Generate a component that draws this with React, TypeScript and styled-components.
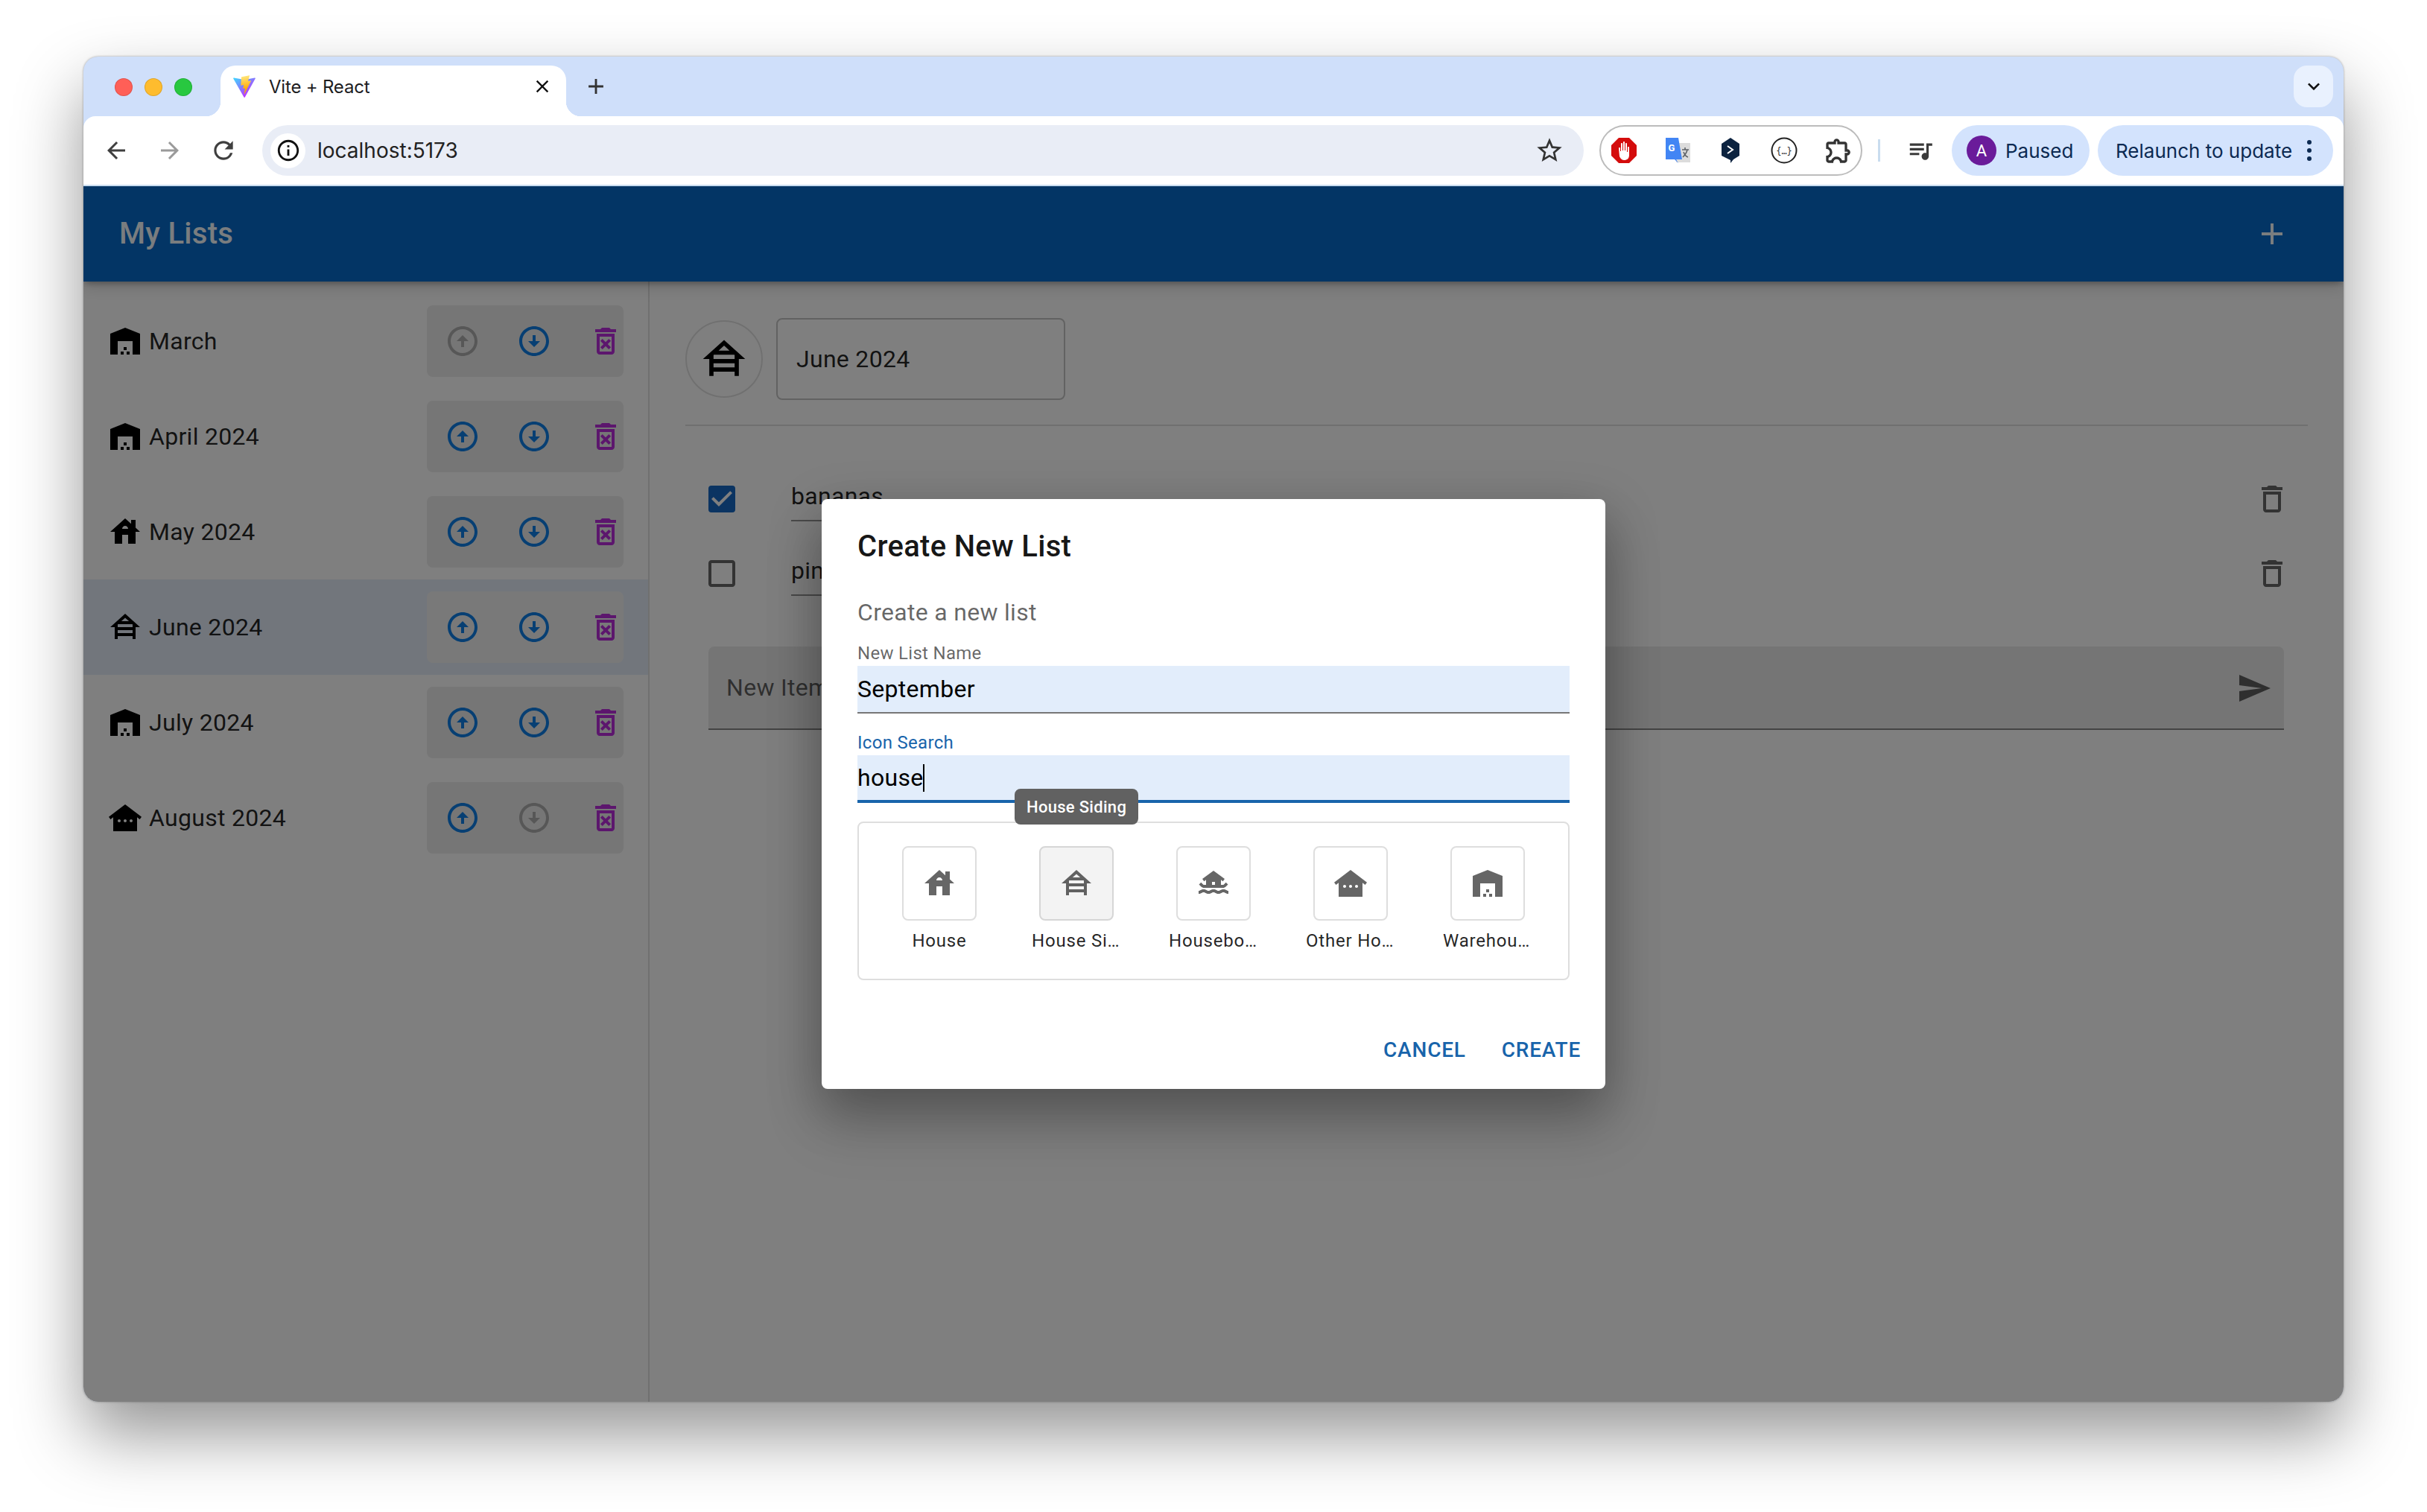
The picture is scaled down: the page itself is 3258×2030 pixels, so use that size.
import React from 'react';
import styled, { createGlobalStyle } from 'styled-components';
import {
  MdAdd, MdArrowBack, MdArrowForward, MdCheckBox, MdCheckBoxOutlineBlank, MdClose, MdHouse,
  MdHouseSiding, MdHouseboat, MdInfoOutline, MdKeyboardArrowDown, MdOtherHouses,
  MdOutlineArrowCircleDown, MdOutlineArrowCircleUp, MdOutlineDelete, MdOutlineDeleteForever,
  MdOutlineExtension, MdQueueMusic, MdRefresh, MdSend, MdStarBorder, MdWarehouse,
} from 'react-icons/md';

const GlobalStyle = createGlobalStyle`
  html, body { margin: 0; padding: 0; background: #fff; }
  body { font-family: Roboto, "Liberation Sans", sans-serif; }
  * { box-sizing: border-box; }
`;

const Page = styled.div`
  width: 3258px;
  height: 2030px;
  padding: 76px 112px 148px;
  overflow: hidden;
  background: #fff;
`;

const Win = styled.div`
  height: 100%;
  display: flex;
  flex-direction: column;
  border-radius: 20px;
  background: #cfdffa;
  box-shadow: 0 44px 90px rgba(0, 0, 0, 0.42), 0 0 3px rgba(0, 0, 0, 0.35);
`;

/* browser chrome */
const TabStrip = styled.div`
  height: 80px;
  flex: none;
  display: flex;
  padding: 12px 14px 0 42px;
`;

const Lights = styled.div`
  display: flex;
  gap: 16px;
  padding-top: 17px;
`;

const Light = styled.span<{ $c: string }>`
  width: 24px;
  height: 24px;
  border-radius: 50%;
  background: ${(p) => p.$c};
  box-shadow: inset 0 0 0 1px rgba(0, 0, 0, 0.12);
`;

const Tab = styled.div`
  position: relative;
  width: 464px;
  height: 68px;
  margin-left: 38px;
  padding: 0 18px 12px 15px;
  display: flex;
  align-items: center;
  background: #fff;
  border-radius: 20px 20px 0 0;
  font: 400 24px Inter, "Liberation Sans", sans-serif;
  color: #1d1d1f;

  &::before, &::after {
    content: '';
    position: absolute;
    bottom: 0;
    width: 20px;
    height: 20px;
  }
  &::before { left: -20px; background: radial-gradient(circle at 0 0, transparent 20px, #fff 20.5px); }
  &::after { right: -20px; background: radial-gradient(circle at 100% 0, transparent 20px, #fff 20.5px); }
`;

const TabTitle = styled.span`
  margin-left: 16px;
  flex: 1;
  letter-spacing: -0.2px;
`;

const NewTab = styled.div`
  width: 40px;
  margin-left: 20px;
  height: 56px;
  display: flex;
  align-items: center;
  justify-content: center;
  color: #333;
`;

const TabMenu = styled.div`
  width: 53px;
  height: 56px;
  margin-left: auto;
  border-radius: 18px;
  display: flex;
  align-items: center;
  justify-content: center;
  background: #e9f1fe;
  color: #111;
`;

const Toolbar = styled.div`
  height: 94px;
  flex: none;
  display: flex;
  align-items: flex-start;
  padding: 12px 14px 0 8px;
  background: #fff;
  border-radius: 16px 16px 0 0;
  border-bottom: 2px solid #c9dcef;
  font-family: Inter, "Liberation Sans", sans-serif;
`;

const NavButton = styled.div<{ $off?: boolean }>`
  width: 72px;
  height: 68px;
  display: flex;
  align-items: center;
  justify-content: center;
  color: ${(p) => (p.$off ? '#9a9a9a' : '#3f3f3f')};
`;

const Omnibox = styled.div`
  flex: 1;
  height: 68px;
  margin-left: 16px;
  padding: 0 26px 0 11px;
  display: flex;
  align-items: center;
  border-radius: 34px;
  background: #e9edf6;
  color: #222;
  font-size: 28px;
`;

const SiteInfo = styled.div`
  width: 47px;
  height: 47px;
  display: flex;
  align-items: center;
  justify-content: center;
  border-radius: 50%;
  background: #fff;
  color: #111;
`;

const Url = styled.span`
  margin-left: 16px;
  flex: 1;
`;

const ExtensionPill = styled.div`
  width: 353px;
  height: 68px;
  margin-left: 21px;
  padding: 0 10px 0 13px;
  display: flex;
  align-items: center;
  justify-content: space-between;
  border: 2px solid #bcbcbc;
  border-radius: 34px;
`;

const ExtIcon = styled.svg`
  width: 36px;
  height: 36px;
  display: block;
`;

const ToolbarDivider = styled.div`
  width: 3px;
  height: 30px;
  margin: 19px 0 0 21px;
  background: #c9dcef;
`;

const MediaButton = styled.div`
  width: 48px;
  height: 68px;
  margin-left: 30px;
  display: flex;
  align-items: center;
  justify-content: center;
  color: #3a3a3a;
`;

const ProfilePill = styled.div`
  width: 185px;
  height: 68px;
  margin-left: 18px;
  padding-left: 20px;
  display: flex;
  align-items: center;
  border-radius: 34px;
  background: #d3e3fd;
  color: #0c2a52;
  font-size: 26px;
`;

const Avatar = styled.div`
  width: 40px;
  height: 40px;
  margin-right: 12px;
  display: flex;
  align-items: center;
  justify-content: center;
  border-radius: 50%;
  background: #6a1b9a;
  color: #fff;
  font: 400 22px Roboto, sans-serif;
`;

const UpdatePill = styled.div`
  width: 316px;
  height: 68px;
  margin-left: 11px;
  padding-left: 24px;
  display: flex;
  align-items: center;
  border-radius: 34px;
  background: #d3e3fd;
  color: #0c2a52;
  font-size: 26px;
  white-space: nowrap;
`;

const Dots = styled.div`
  margin-left: 20px;
  display: flex;
  flex-direction: column;
  gap: 5px;

  span {
    width: 6px;
    height: 6px;
    border-radius: 50%;
    background: #0c2a52;
  }
`;

/* the app */
const Viewport = styled.div`
  position: relative;
  flex: 1;
  min-height: 0;
  display: flex;
  flex-direction: column;
  overflow: hidden;
  background: #fff;
  border-radius: 0 0 20px 20px;
  letter-spacing: 0.3px;
`;

const AppBar = styled.div`
  position: relative;
  z-index: 1;
  height: 128px;
  flex: none;
  display: flex;
  align-items: center;
  justify-content: space-between;
  padding: 0 72px 0 48px;
  background: #066aca;
  color: #f4faff;
  box-shadow: 0 4px 8px -2px rgba(0, 0, 0, 0.3), 0 8px 20px rgba(0, 0, 0, 0.14);
  font: 500 40px/64px Roboto, sans-serif;
`;

const Body = styled.div`
  flex: 1;
  display: flex;
  min-height: 0;
`;

const Sidebar = styled.div`
  width: 760px;
  flex: none;
  padding-top: 16px;
  border-right: 2px solid rgba(0, 0, 0, 0.12);
`;

const ListRow = styled.div<{ $active?: boolean }>`
  height: 128px;
  display: flex;
  align-items: center;
  padding: 0 33px 0 32px;
  background: ${(p) => (p.$active ? '#e4ecf8' : 'transparent')};
  color: rgba(0, 0, 0, 0.87);
  font-size: 32px;
`;

const RowIcon = styled.div`
  width: 48px;
  height: 48px;
  margin-right: 8px;
  color: #000;
`;

const RowName = styled.span`
  flex: 1;
`;

const RowActions = styled.div<{ $active?: boolean }>`
  width: 264px;
  height: 96px;
  display: flex;
  align-items: center;
  border-radius: 8px;
  background: ${(p) => (p.$active ? '#f3f3f3' : '#ececec')};
`;

const MoveButton = styled.div<{ $off?: boolean }>`
  width: 96px;
  height: 96px;
  display: flex;
  align-items: center;
  justify-content: center;
  color: ${(p) => (p.$off ? 'rgba(0,0,0,0.26)' : '#0f7fe6')};
`;

const RemoveButton = styled.div`
  width: 48px;
  height: 48px;
  margin-left: 24px;
  color: #b92ddb;
`;

const Content = styled.div`
  flex: 1;
  min-width: 0;
  padding: 49px 48px 0;
`;

const HeadRow = styled.div`
  display: flex;
  align-items: center;
  gap: 18px;
`;

const IconCircle = styled.div`
  width: 104px;
  height: 104px;
  display: flex;
  align-items: center;
  justify-content: center;
  border: 2px solid rgba(0, 0, 0, 0.12);
  border-radius: 50%;
  color: #000;
`;

const NameField = styled.div`
  width: 388px;
  height: 110px;
  padding-left: 25px;
  display: flex;
  align-items: center;
  border: 2px solid rgba(0, 0, 0, 0.23);
  border-radius: 8px;
  color: rgba(0, 0, 0, 0.87);
  font-size: 32px;
`;

const Rule = styled.div`
  height: 2px;
  margin: 33px 0 48px;
  background: rgba(0, 0, 0, 0.12);
`;

const ItemRow = styled.div`
  height: 100px;
  display: flex;
  align-items: center;
  padding: 0 24px 0 25px;
`;

const Check = styled.div<{ $on?: boolean }>`
  width: 48px;
  height: 48px;
  margin-right: 69px;
  color: ${(p) => (p.$on ? '#1668c4' : 'rgba(0,0,0,0.6)')};
`;

const ItemText = styled.div`
  width: 1000px;
  height: 58px;
  align-self: flex-start;
  margin-top: 22px;
  border-bottom: 2px solid rgba(0, 0, 0, 0.42);
  color: rgba(0, 0, 0, 0.87);
  font-size: 32px;
  line-height: 48px;
`;

const ItemDelete = styled.div`
  width: 48px;
  height: 48px;
  margin-left: auto;
  color: rgba(0, 0, 0, 0.6);
`;

const NewItem = styled.div`
  height: 112px;
  margin: 48px 32px 0 31px;
  padding: 0 16px 0 24px;
  display: flex;
  align-items: center;
  justify-content: space-between;
  background: #ebebeb;
  border-bottom: 2px solid rgba(0, 0, 0, 0.42);
  border-radius: 8px 8px 0 0;
  color: rgba(0, 0, 0, 0.6);
  font-size: 32px;
`;

const SendIcon = styled.div`
  width: 48px;
  height: 48px;
  margin-top: 2px;
  color: rgba(0, 0, 0, 0.6);
`;

/* dialog */
const Backdrop = styled.div`
  position: absolute;
  inset: 0;
  z-index: 2;
  display: flex;
  align-items: center;
  justify-content: center;
  background: rgba(0, 0, 0, 0.5);
`;

const Dialog = styled.div`
  position: relative;
  width: 1052px;
  height: 792px;
  padding: 32px 17px 17px 48px;
  background: #fff;
  border-radius: 8px;
  box-shadow: 0 22px 70px rgba(0, 0, 0, 0.28), 0 48px 76px 6px rgba(0, 0, 0, 0.14);
`;

const DialogTitle = styled.div`
  font: 500 40px/64px Roboto, sans-serif;
  color: rgba(0, 0, 0, 0.92);
`;

const DialogText = styled.div`
  margin-top: 32px;
  font-size: 32px;
  line-height: 48px;
  color: rgba(0, 0, 0, 0.6);
`;

const DialogBody = styled.div`
  width: 956px;
`;

const FieldLabel = styled.div<{ $focus?: boolean }>`
  height: 32px;
  margin-top: ${(p) => (p.$focus ? '24px' : '16px')};
  font-size: 24px;
  line-height: 30px;
  color: ${(p) => (p.$focus ? '#1864ab' : 'rgba(0,0,0,0.6)')};
`;

const FieldInput = styled.div<{ $focus?: boolean }>`
  height: 64px;
  display: flex;
  align-items: center;
  background: #e2edfb;
  border-bottom: ${(p) => (p.$focus ? '4px solid #1864ab' : '2px solid #777')};
  color: #000;
  font-size: 32px;
`;

const Caret = styled.span`
  width: 2px;
  height: 37px;
  margin-left: -1px;
  background: #000;
`;

const Tip = styled.div`
  position: absolute;
  left: 259px;
  top: 389px;
  height: 48px;
  padding: 0 16px;
  display: flex;
  align-items: center;
  border-radius: 8px;
  background: #616161;
  color: #fff;
  font: 500 22px Roboto, sans-serif;
  white-space: nowrap;
`;

const IconGrid = styled.div`
  height: 213px;
  margin-top: 25px;
  padding-top: 31px;
  display: flex;
  justify-content: center;
  border: 2px solid #dedede;
  border-radius: 8px;
`;

const Tile = styled.div`
  width: 184px;
  display: flex;
  flex-direction: column;
  align-items: center;
`;

const TileCard = styled.div<{ $active?: boolean }>`
  width: 100px;
  height: 100px;
  display: flex;
  align-items: center;
  justify-content: center;
  border: 2px solid ${(p) => (p.$active ? '#d6d6d6' : '#dedede')};
  border-radius: 8px;
  background: ${(p) => (p.$active ? '#f3f3f3' : '#fff')};
  color: rgba(0, 0, 0, 0.6);
`;

const TileLabel = styled.div`
  width: 120px;
  margin-top: 11px;
  overflow: hidden;
  text-overflow: ellipsis;
  white-space: nowrap;
  text-align: center;
  font-size: 24px;
  line-height: 32px;
  letter-spacing: 0.8px;
  color: rgba(0, 0, 0, 0.87);
`;

const DialogActions = styled.div`
  margin-top: 57px;
  display: flex;
  justify-content: flex-end;
  gap: 16px;
`;

const TextButton = styled.div`
  padding: 12px 16px;
  color: #1864ab;
  font-size: 28px;
  font-weight: 500;
  line-height: 49px;
  letter-spacing: 0.8px;
`;

const lists = [
  { name: 'March', Icon: MdWarehouse, upOff: true },
  { name: 'April 2024', Icon: MdWarehouse },
  { name: 'May 2024', Icon: MdHouse },
  { name: 'June 2024', Icon: MdHouseSiding, active: true },
  { name: 'July 2024', Icon: MdWarehouse },
  { name: 'August 2024', Icon: MdOtherHouses, downOff: true },
];

const items = [
  { text: 'bananas', on: true },
  { text: 'pineapple', on: false },
];

const tiles = [
  { name: 'House', Icon: MdHouse },
  { name: 'House Siding', Icon: MdHouseSiding, active: true },
  { name: 'Houseboat', Icon: MdHouseboat },
  { name: 'Other Houses', Icon: MdOtherHouses },
  { name: 'Warehouse', Icon: MdWarehouse },
];

const ViteLogo = () => (
  <svg width="34" height="34" viewBox="0 0 32 32" style={{ flex: 'none' }}>
    <defs>
      <linearGradient id="va" x1="6" y1="4" x2="22" y2="26" gradientUnits="userSpaceOnUse">
        <stop stopColor="#41D1FF" />
        <stop offset="1" stopColor="#BD34FE" />
      </linearGradient>
      <linearGradient id="vb" x1="15" y1="2" x2="18" y2="20" gradientUnits="userSpaceOnUse">
        <stop stopColor="#FFEA83" />
        <stop offset="1" stopColor="#FFA800" />
      </linearGradient>
    </defs>
    <path fill="url(#va)" d="M29.884 6.146 16.742 29.646a.714.714 0 0 1-1.244.005L2.096 6.148a.714.714 0 0 1 .746-1.057l13.156 2.352a.714.714 0 0 0 .254 0l12.881-2.348a.714.714 0 0 1 .751 1.05Z" />
    <path fill="url(#vb)" d="M22.264 2.007 12.54 3.912a.357.357 0 0 0-.288.33l-.598 10.104a.357.357 0 0 0 .437.369l2.707-.625a.357.357 0 0 1 .43.42l-.804 3.939a.357.357 0 0 0 .453.413l1.672-.508a.357.357 0 0 1 .454.413l-1.279 6.187c-.08.387.435.598.65.267l.143-.222 7.925-15.815a.357.357 0 0 0-.387-.51l-2.787.537a.357.357 0 0 1-.41-.45l1.818-6.306a.357.357 0 0 0-.412-.45Z" />
  </svg>
);

const StopIcon = () => (
  <ExtIcon viewBox="0 0 36 36">
    <path fill="#d40c0c" d="M11 1h14l10 10v14L25 35H11L1 25V11z" />
    <path fill="#fff" d="M11 15c0-1.300 2-1.300 2 0v4h1V9c0-1.300 2-1.300 2 0v9h1V7c0-1.300 2-1.300 2 0v11h1V9c0-1.300 2-1.300 2 0v11h1v-6c0-1.300 2-1.300 2 0v10c0 5-3 7-6.500 7-3 0-5-1.500-6.500-5z" />
  </ExtIcon>
);

const TranslateIcon = () => (
  <ExtIcon viewBox="0 0 36 36">
    <rect x="16" y="8" width="19" height="26" fill="#dcdcdc" />
    <path fill="#4285f4" d="M2 1h17l5 29H14l5 5-3-5H2z" />
    <text x="10" y="19" fontFamily="Roboto, sans-serif" fontSize="13" fontWeight="700" fill="#fff" textAnchor="middle">G</text>
    <path stroke="#5f6368" strokeWidth="1.600" fill="none" d="M24 17h9M28 14v3M31 17c-1 5-4 8-6 10M26 20c1 3 3 6 6 7" />
  </ExtIcon>
);

const HexIcon = () => (
  <ExtIcon viewBox="0 0 36 36">
    <path fill="#0c2340" d="M18 1l12 8v16l-8 5-4 5v-4L6 25V9z" />
    <path stroke="#fff" strokeWidth="2" fill="none" d="M14 12l7 5-7 5" />
  </ExtIcon>
);

const JsonIcon = () => (
  <ExtIcon viewBox="0 0 36 36">
    <circle cx="18" cy="18" r="16.500" fill="#fff" stroke="#222" strokeWidth="2" />
    <text x="18" y="23" fontFamily="'DejaVu Sans Mono', monospace" fontSize="12" fill="#333" textAnchor="middle">{'{…}'}</text>
  </ExtIcon>
);

const App = () => {
  return (
    <>
      <GlobalStyle />
      <Page>
        <Win>
          <TabStrip>
            <Lights>
              <Light $c="#ff5f57" />
              <Light $c="#febc2e" />
              <Light $c="#28c840" />
            </Lights>
            <Tab>
              <ViteLogo />
              <TabTitle>Vite + React</TabTitle>
              <MdClose size={28} color="#111" />
            </Tab>
            <NewTab>
              <MdAdd size={34} />
            </NewTab>
            <TabMenu>
              <MdKeyboardArrowDown size={32} />
            </TabMenu>
          </TabStrip>

          <Toolbar>
            <NavButton><MdArrowBack size={36} /></NavButton>
            <NavButton $off><MdArrowForward size={36} /></NavButton>
            <NavButton><MdRefresh size={38} /></NavButton>
            <Omnibox>
              <SiteInfo><MdInfoOutline size={34} /></SiteInfo>
              <Url>localhost:5173</Url>
              <MdStarBorder size={40} color="#333" />
            </Omnibox>
            <ExtensionPill>
              <StopIcon />
              <TranslateIcon />
              <HexIcon />
              <JsonIcon />
              <MdOutlineExtension size={40} color="#333" />
            </ExtensionPill>
            <ToolbarDivider />
            <MediaButton><MdQueueMusic size={38} /></MediaButton>
            <ProfilePill>
              <Avatar>A</Avatar>
              Paused
            </ProfilePill>
            <UpdatePill>
              Relaunch to update
              <Dots><span /><span /><span /></Dots>
            </UpdatePill>
          </Toolbar>

          <Viewport>
            <AppBar>
              My Lists
              <MdAdd size={48} />
            </AppBar>

            <Body>
              <Sidebar>
                {lists.map((l) => (
                  <ListRow key={l.name} $active={l.active}>
                    <RowIcon><l.Icon size={48} /></RowIcon>
                    <RowName>{l.name}</RowName>
                    <RowActions $active={l.active}>
                      <MoveButton $off={l.upOff}><MdOutlineArrowCircleUp size={48} /></MoveButton>
                      <MoveButton $off={l.downOff}><MdOutlineArrowCircleDown size={48} /></MoveButton>
                      <RemoveButton><MdOutlineDeleteForever size={48} /></RemoveButton>
                    </RowActions>
                  </ListRow>
                ))}
              </Sidebar>

              <Content>
                <HeadRow>
                  <IconCircle><MdHouseSiding size={68} /></IconCircle>
                  <NameField>June 2024</NameField>
                </HeadRow>
                <Rule />
                {items.map((it) => (
                  <ItemRow key={it.text}>
                    <Check $on={it.on}>
                      {it.on ? <MdCheckBox size={48} /> : <MdCheckBoxOutlineBlank size={48} />}
                    </Check>
                    <ItemText>{it.text}</ItemText>
                    <ItemDelete><MdOutlineDelete size={48} /></ItemDelete>
                  </ItemRow>
                ))}
                <NewItem>
                  New Item
                  <SendIcon><MdSend size={48} /></SendIcon>
                </NewItem>
              </Content>
            </Body>

            <Backdrop>
              <Dialog>
                <DialogTitle>Create New List</DialogTitle>
                <DialogBody>
                  <DialogText>Create a new list</DialogText>
                  <FieldLabel>New List Name</FieldLabel>
                  <FieldInput>September</FieldInput>
                  <FieldLabel $focus>Icon Search</FieldLabel>
                  <FieldInput $focus>house<Caret /></FieldInput>
                  <IconGrid>
                    {tiles.map((t) => (
                      <Tile key={t.name}>
                        <TileCard $active={t.active}><t.Icon size={48} /></TileCard>
                        <TileLabel>{t.name}</TileLabel>
                      </Tile>
                    ))}
                  </IconGrid>
                </DialogBody>
                <DialogActions>
                  <TextButton>CANCEL</TextButton>
                  <TextButton>CREATE</TextButton>
                </DialogActions>
                <Tip>House Siding</Tip>
              </Dialog>
            </Backdrop>
          </Viewport>
        </Win>
      </Page>
    </>
  );
};

export default App;
